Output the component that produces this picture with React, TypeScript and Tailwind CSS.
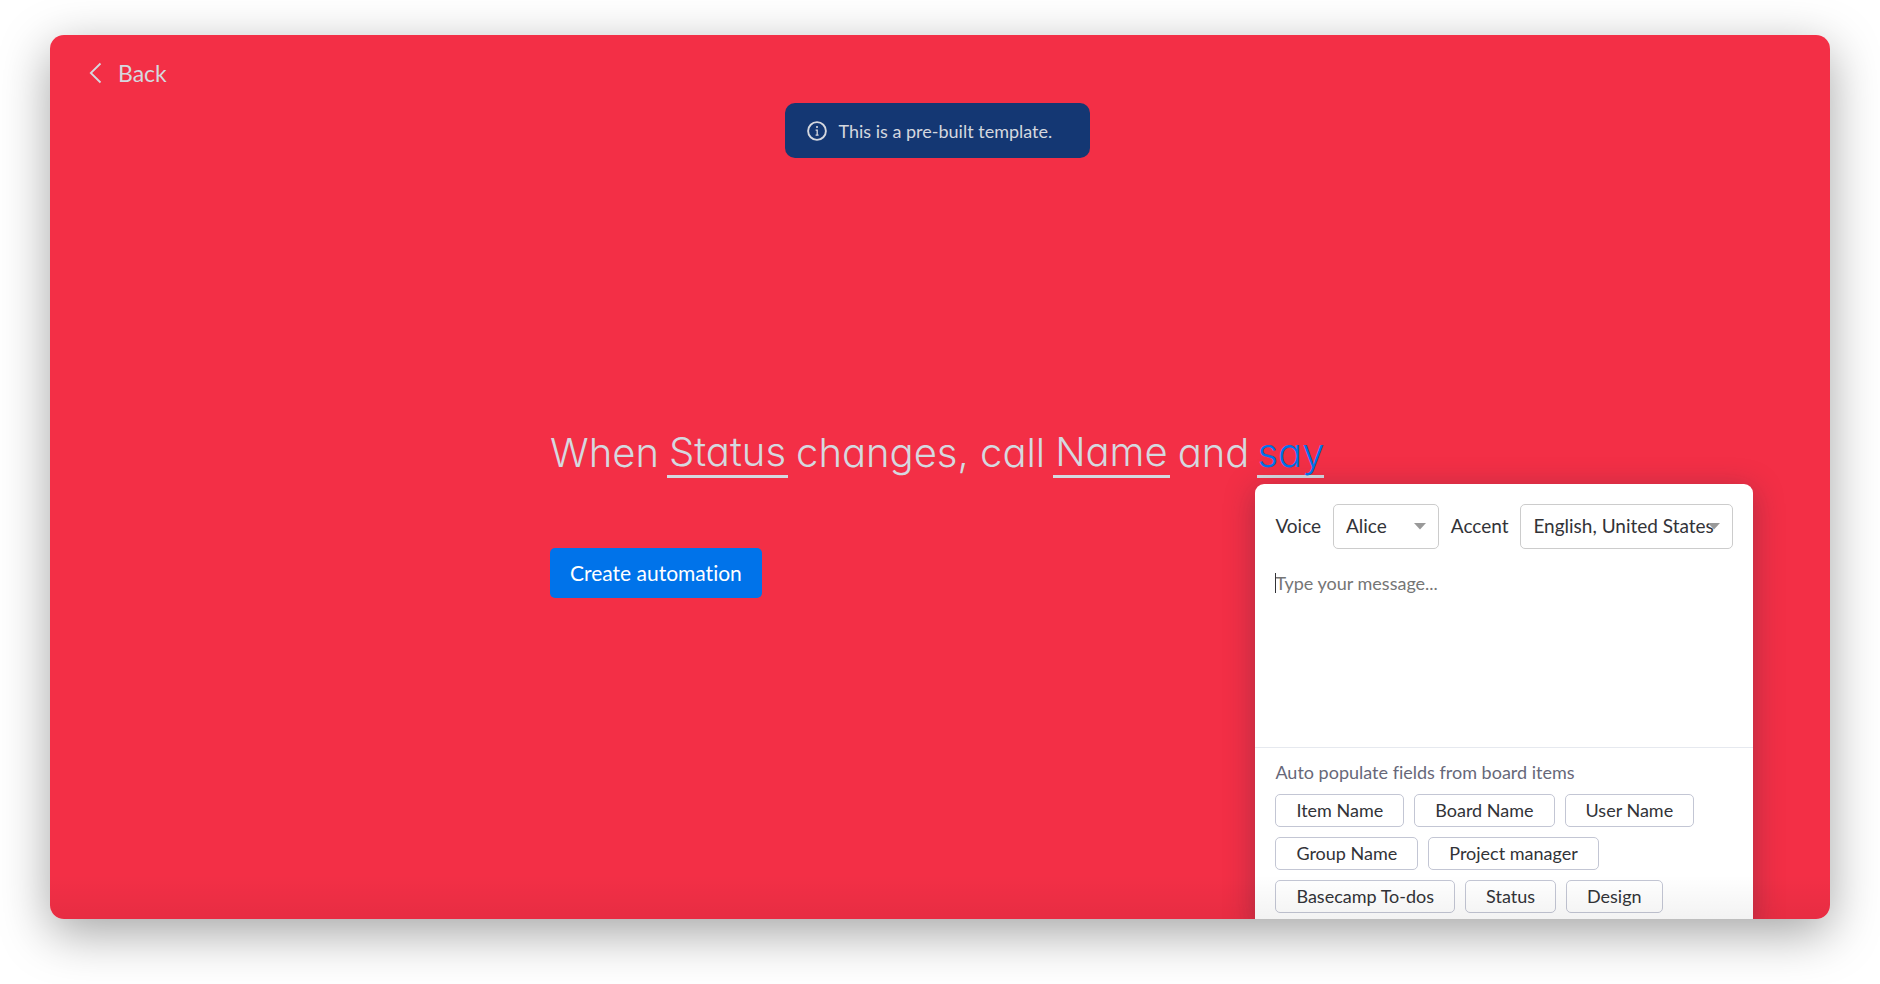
import React, { useState } from "react"

const voices = ["Alice", "Man", "Woman"]
const accents = ["English, United States", "English, United Kingdom", "English, Australia"]

const fields = [
  "Item Name",
  "Board Name",
  "User Name",
  "Group Name",
  "Project manager",
  "Basecamp To-dos",
  "Status",
  "Design"
]

interface PickerProps {
  id: string
  label: string
  value: string
  options: string[]
  onChange: (value: string) => void
  className: string
}

const Picker: React.FC<PickerProps> = ({ id, label, value, options, onChange, className }) => (
  <>
    <label htmlFor={id} className="shrink-0">
      {label}
    </label>
    <div className={`relative h-[45px] ${className}`}>
      <select
        id={id}
        value={value}
        onChange={(e) => onChange(e.target.value)}
        className="h-full w-full appearance-none rounded-[5px] border border-[#cccccc] bg-white pl-3 outline-none"
      >
        {options.map((option) => (
          <option key={option}>{option}</option>
        ))}
      </select>
      <svg
        viewBox="0 0 12 7"
        className="pointer-events-none absolute top-[19px] right-[13px] h-[7px] w-3 fill-[#999999]"
      >
        <path d="M0 0h12L6 6.5z" />
      </svg>
    </div>
  </>
)

const MessagePopover: React.FC = () => {
  const [voice, setVoice] = useState(voices[0])
  const [accent, setAccent] = useState(accents[0])
  const [message, setMessage] = useState("")

  return (
    <div className="absolute top-full -left-0.5 mt-1.5 w-[498px] rounded-t-[9px] bg-white text-[#323338] shadow-[0_6px_30px_rgba(40,40,60,0.35)]">
      <div className="flex items-center justify-between px-5 pt-5 text-[19px] leading-6">
        <Picker
          id="voice"
          label="Voice"
          value={voice}
          options={voices}
          onChange={setVoice}
          className="w-[106px]"
        />
        <Picker
          id="accent"
          label="Accent"
          value={accent}
          options={accents}
          onChange={setAccent}
          className="w-[213px]"
        />
      </div>

      <div className="relative border-b border-[#e6e9ef] px-5 pt-5">
        <textarea
          aria-label="Message"
          value={message}
          onChange={(e) => setMessage(e.target.value)}
          placeholder="Type your message..."
          className="block h-[178px] w-full resize-none text-[18px] leading-7 outline-none placeholder:text-[#757575]"
        />
        {/* text cursor */}
        {!message && <span className="absolute top-6 left-5 h-5 w-px bg-[#323338]" />}
      </div>

      <div className="px-5 pt-3 pb-2.5 text-[18px] leading-6">
        <p className="mb-2.5 text-[#676879]">Auto populate fields from board items</p>
        <div className="flex flex-wrap gap-2.5">
          {fields.map((field) => (
            <button
              key={field}
              onClick={() => setMessage(`${message}{${field}}`)}
              className="h-[33px] rounded-[5px] border border-[#c3c6d4] px-5"
            >
              {field}
            </button>
          ))}
        </div>
      </div>
    </div>
  )
}

export default function App() {
  return (
    <div className="flex min-h-screen flex-col bg-white px-[50px] pt-[35px] pb-[65px] font-['Lato',sans-serif] [font-variant-ligatures:none]">
      <div className="flex flex-1 rounded-[14px] shadow-[0_14px_50px_rgba(0,0,0,0.36)]">
        <div className="relative flex flex-1 flex-col overflow-hidden rounded-[14px] bg-[#f32f46] text-[#d5d8df]">
          <header className="px-9 pt-6">
            <button className="flex h-7 items-center gap-4 text-[23px] leading-7">
              <svg
                viewBox="0 0 16 22"
                className="h-[22px] w-4 fill-none stroke-current stroke-[1.8]"
              >
                <path d="M14.5 1.5L4.8 11l9.7 9.5" />
              </svg>
              Back
            </button>
          </header>

          <div className="flex flex-1 flex-col items-center pt-4 pr-1.5">
            <div
              role="status"
              className="flex h-[55px] w-[305px] items-center gap-3 rounded-[10px] bg-[#143773] px-[22px] text-[18px] leading-6 whitespace-nowrap"
            >
              <svg viewBox="0 0 20 20" className="h-5 w-5 shrink-0 fill-none stroke-current">
                <circle cx="10" cy="10" r="8.9" strokeWidth="1.9" />
                <path d="M8.6 9.2h1.6v4.8M8.6 14.2h3" strokeWidth="1.3" />
                <circle cx="10" cy="6" r="1.1" className="fill-current stroke-none" />
              </svg>
              This is a pre-built template.
            </div>

            <main className="flex w-[774px] flex-1 flex-col items-start justify-center pb-[52px]">
              <h1 className="flex items-end gap-2 font-['Inter',sans-serif] text-[40px] leading-[50px] font-[350] whitespace-nowrap [font-feature-settings:'cv11']">
                <span>When</span>
                <button className="border-b-3 px-0.5 leading-[46px]">Status</button>
                <span>changes, call</span>
                <button className="border-b-3 px-0.5 leading-[46px]">Name</button>
                <span>and</span>
                <div className="relative flex">
                  <button className="border-b-3 border-[#d5d8df] leading-[44px] text-[#0073ea]">
                    say
                  </button>
                  <div className="font-['Lato',sans-serif] font-normal whitespace-normal">
                    <MessagePopover />
                  </div>
                </div>
              </h1>
              <button className="mt-[70px] h-[50px] rounded-[5px] bg-[#0073ea] px-5 text-[21px] leading-7 text-white">
                Create automation
              </button>
            </main>
          </div>

          {/* bottom fade */}
          <div className="pointer-events-none absolute inset-x-0 bottom-0 h-11 bg-linear-to-t from-black/5 to-transparent" />
        </div>
      </div>
    </div>
  )
}
